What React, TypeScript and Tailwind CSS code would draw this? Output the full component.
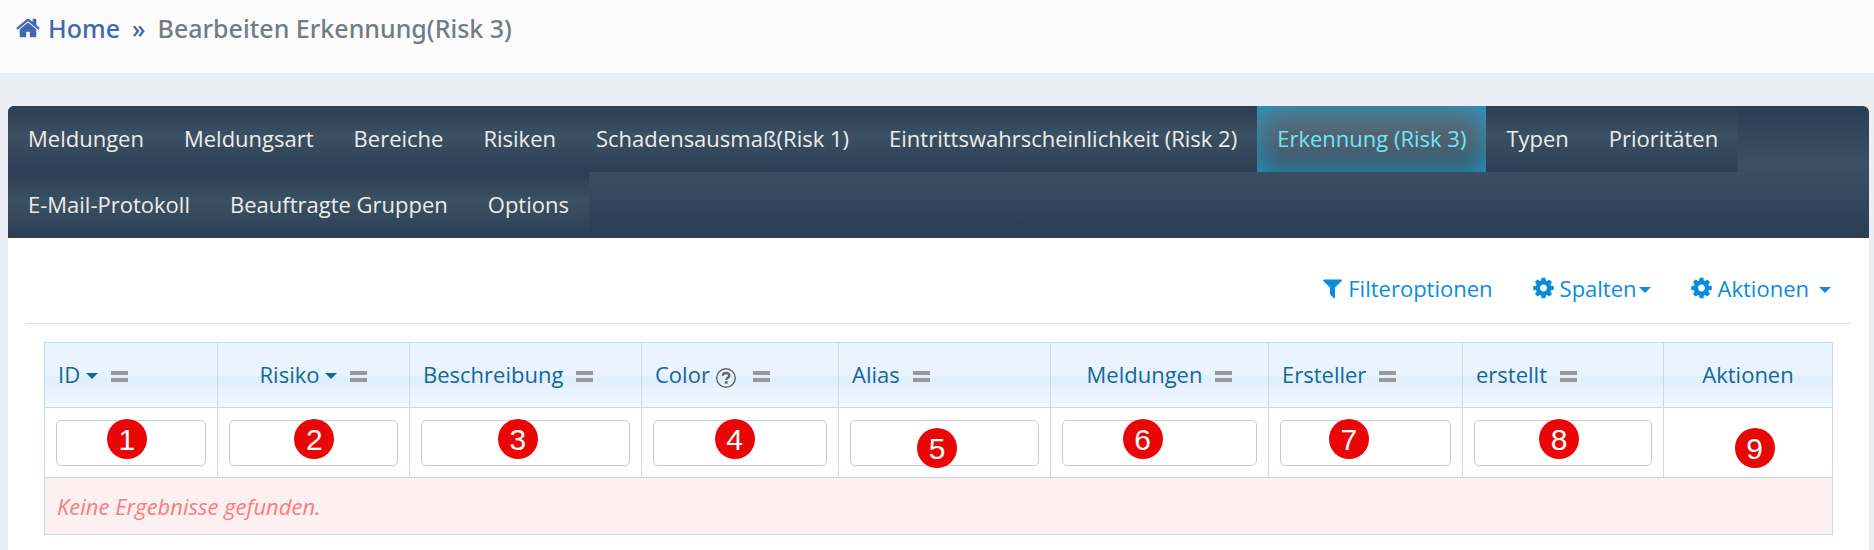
import React from 'react';

interface NavEntry {
  label: string;
  active?: boolean;
}

interface Column {
  label: string;
  width: string;
  centered?: boolean;
  sorted?: boolean;
  help?: boolean;
  grip?: boolean;
  filter?: boolean;
  marker: string;
}

const NAV: NavEntry[] = [
  { label: 'Meldungen' },
  { label: 'Meldungsart' },
  { label: 'Bereiche' },
  { label: 'Risiken' },
  { label: 'Schadensausmaß(Risk 1)' },
  { label: 'Eintrittswahrscheinlichkeit (Risk 2)' },
  { label: 'Erkennung (Risk 3)', active: true },
  { label: 'Typen' },
  { label: 'Prioritäten' },
  { label: 'E-Mail-Protokoll' },
  { label: 'Beauftragte Gruppen' },
  { label: 'Options' },
];

const COLUMNS: Column[] = [
  { label: 'ID', width: 'w-[173px]', sorted: true, grip: true, filter: true, marker: 'left-[36%] top-[11px]' },
  { label: 'Risiko', width: 'w-[192px]', centered: true, sorted: true, grip: true, filter: true, marker: 'left-[40%] top-[11px]' },
  { label: 'Beschreibung', width: 'w-[232px]', grip: true, filter: true, marker: 'left-[38%] top-[11px]' },
  { label: 'Color', width: 'w-[197px]', help: true, grip: true, filter: true, marker: 'left-[37%] top-[11px]' },
  { label: 'Alias', width: 'w-[212px]', grip: true, filter: true, marker: 'left-[37%] top-5' },
  { label: 'Meldungen', width: 'w-[218px]', centered: true, grip: true, filter: true, marker: 'left-[33%] top-[11px]' },
  { label: 'Ersteller', width: 'w-[194px]', grip: true, filter: true, marker: 'left-[31%] top-[11px]' },
  { label: 'erstellt', width: 'w-[201px]', grip: true, filter: true, marker: 'left-[38%] top-[11px]' },
  { label: 'Aktionen', width: 'w-[169px]', centered: true, marker: 'left-[42%] top-5' },
];

const HomeIcon = () => (
  <svg viewBox="0 0 1664 1792" className="h-[26px] w-6 fill-current" aria-hidden="true">
    <path d="M1408 992v480q0 26-19 45t-45 19h-384v-384h-256v384h-384q-26 0-45-19t-19-45v-480q0-1 .5-3t.5-3l575-474 575 474q1 2 1 6zm223-69l-62 74q-8 9-21 11h-3q-13 0-21-7l-692-577-692 577q-12 8-24 7-13-2-21-11l-62-74q-8-10-7-23.5t11-21.5l719-599q32-26 76-26t76 26l244 204v-195q0-14 9-23t23-9h192q14 0 23 9t9 23v408l219 182q10 8 11 21.5t-7 23.5z" />
  </svg>
);

const FilterIcon = () => (
  <svg viewBox="192 0 1408 1792" className="h-6 w-[19px] fill-current" aria-hidden="true">
    <path d="M1595 295q17 41-14 70l-493 493v742q0 42-39 59-13 5-25 5-27 0-45-19l-256-256q-19-19-19-45v-486l-493-493q-31-29-14-70 17-39 59-39h1280q42 0 59 39z" />
  </svg>
);

const CogIcon = () => (
  <svg viewBox="128 0 1536 1792" className="h-6 w-[21px] fill-current" aria-hidden="true">
    <path d="M1152 896q0-106-75-181t-181-75-181 75-75 181 75 181 181 75 181-75 75-181zm512-109v222q0 12-8 23t-20 13l-185 28q-19 54-39 91 35 50 107 138 10 12 10 25t-9 23q-27 37-99 108t-94 71q-12 0-26-9l-138-108q-44 23-91 38-16 136-29 186-7 28-36 28h-222q-14 0-24.5-8.5t-11.5-21.5l-28-184q-49-16-90-37l-141 107q-10 9-25 9-14 0-25-11-126-114-165-168-7-10-7-23 0-12 8-23 15-21 51-66.5t54-70.5q-27-50-41-99l-183-27q-13-2-21-12.5t-8-23.5v-222q0-12 8-23t19-13l186-28q14-46 39-92-40-57-107-138-10-12-10-24 0-10 9-23 26-36 98.5-107.5t94.5-71.5q13 0 26 10l138 107q44-23 91-38 16-136 29-186 7-28 36-28h222q14 0 24.5 8.5t11.5 21.5l28 184q49 16 90 37l142-107q9-9 24-9 13 0 25 10 129 119 165 170 7 8 7 22 0 12-8 23-15 21-51 66.5t-54 70.5q26 50 41 98l183 28q13 2 21 12.5t8 23.5z" />
  </svg>
);

const Caret = () => (
  <svg viewBox="0 0 12 6" className="mt-1 h-[6px] w-3 shrink-0 fill-current" aria-hidden="true">
    <path d="M0 0h12L6 6z" />
  </svg>
);

const HelpIcon = () => (
  <svg viewBox="0 0 20 20" className="mt-2 mr-1 h-5 w-5 shrink-0 text-[#666]" fill="none" stroke="currentColor" aria-hidden="true">
    <circle cx="10" cy="10" r="9.3" strokeWidth="1.4" />
    <path d="M6.8 7.8C6.8 5.9 8.1 5 10 5s3.3 1 3.3 2.7c0 2.1-2.9 2.1-2.9 4.2" strokeWidth="2.4" />
    <path d="M10.3 13.2v2.5" strokeWidth="2.8" />
  </svg>
);

const Grip = () => (
  <span className="ml-[13px] mt-1 flex shrink-0 flex-col gap-[3px]" aria-hidden="true">
    <span className="h-1 w-[17px] bg-[#999]" />
    <span className="h-1 w-[17px] bg-[#999]" />
  </span>
);

export default function App() {
  return (
    <div className="flex min-h-screen flex-col bg-[#ebeef4] font-['Open_Sans','Noto_Sans',sans-serif] text-[22px]">
      <header className="h-[73px] bg-[#fbfbfb] px-4 pt-[10px]">
        <nav className="flex items-center font-['Noto_Sans',sans-serif] text-[25px] leading-9 font-medium" aria-label="Breadcrumb">
          <a href="#home" className="flex items-center gap-2 text-[#4267b2]">
            <HomeIcon />
            Home
          </a>
          <span className="mx-3 text-[#47689c]">»</span>
          <span className="text-[#737c83]">Bearbeiten Erkennung(Risk 3)</span>
        </nav>
      </header>

      <main className="mt-[33px] mr-[5px] ml-2 grow rounded-t-md bg-white">
        <nav className="rounded-t-md bg-linear-to-b from-[#2b3e53] via-[#3c5064] via-45% to-[#2b3d53]" aria-label="Verwaltung">
          <ul className="flex flex-wrap overflow-hidden rounded-t-md">
            {NAV.map((entry) => (
              <li key={entry.label}>
                <a
                  href="#tab"
                  aria-current={entry.active ? 'page' : undefined}
                  className={
                    entry.active
                      ? 'block h-[66px] bg-linear-to-b from-[#5b6f80] via-[#53616e] to-[#3a5062] px-5 leading-[64px] text-[#6ce8f4] shadow-[inset_0_0_30px_#1e9cc8]'
                      : 'block h-[66px] bg-linear-to-b from-[#2b3e53] via-[#3c5064] via-45% to-[#2b3e53] px-5 leading-[64px] text-[#ececec]'
                  }
                >
                  {entry.label}
                </a>
              </li>
            ))}
          </ul>
        </nav>

        <div className="mx-[18px] flex h-[86px] items-center justify-end gap-10 border-b border-[#ddd] pt-[15px] pr-5 text-[#0a8cdc] text-shadow-[0_2px_2px_#b5dcf7]">
          <button type="button" className="flex items-center gap-[6px]">
            <FilterIcon />
            Filteroptionen
          </button>
          <button type="button" className="flex items-center gap-[6px]">
            <CogIcon />
            <span className="-mr-1">Spalten</span>
            <Caret />
          </button>
          <button type="button" className="flex items-center gap-[6px]">
            <CogIcon />
            <span className="mr-1">Aktionen</span>
            <Caret />
          </button>
        </div>

        <div className="px-9 pt-[18px]">
          <table className="w-full table-fixed border-collapse border border-[#c5dbec]">
            <colgroup>
              {COLUMNS.map((col) => (
                <col key={col.label} className={col.width} />
              ))}
            </colgroup>
            <thead>
              <tr>
                {COLUMNS.map((col) => (
                  <th
                    key={col.label}
                    scope="col"
                    className="h-[65px] border border-[#c5dbec] bg-linear-to-b from-[#e9f4fe] from-50% via-[#deeefc] via-52% to-[#f2f8fe] px-[13px] pb-[2px] font-normal text-[#146799]"
                  >
                    <div className={col.centered ? 'flex items-center justify-center' : 'flex items-center'}>
                      <a href="#sort" className="flex items-center gap-[6px]">
                        {col.label}
                        {col.sorted && <Caret />}
                        {col.help && <HelpIcon />}
                      </a>
                      {col.grip && <Grip />}
                    </div>
                  </th>
                ))}
              </tr>
            </thead>
            <tbody>
              <tr>
                {COLUMNS.map((col, index) => (
                  <td key={col.label} className="relative h-[70px] border border-[#c5dbec] px-[11px]">
                    {col.filter && (
                      <input
                        type="text"
                        aria-label={col.label}
                        className="block h-[46px] w-full rounded-[5px] border border-[#ccc] bg-white px-3"
                      />
                    )}
                    <span
                      className={`absolute flex h-10 w-10 items-center justify-center rounded-full bg-[#ea0606] font-['Liberation_Sans',sans-serif] text-[30px] text-white ${col.marker}`}
                    >
                      {index + 1}
                    </span>
                  </td>
                ))}
              </tr>
              <tr>
                <td colSpan={COLUMNS.length} className="h-[57px] border border-[#c5dbec] bg-[#fcf0f0] px-3 text-[#ff7b7b] italic">
                  Keine Ergebnisse gefunden.
                </td>
              </tr>
            </tbody>
          </table>
        </div>
      </main>
    </div>
  );
}
